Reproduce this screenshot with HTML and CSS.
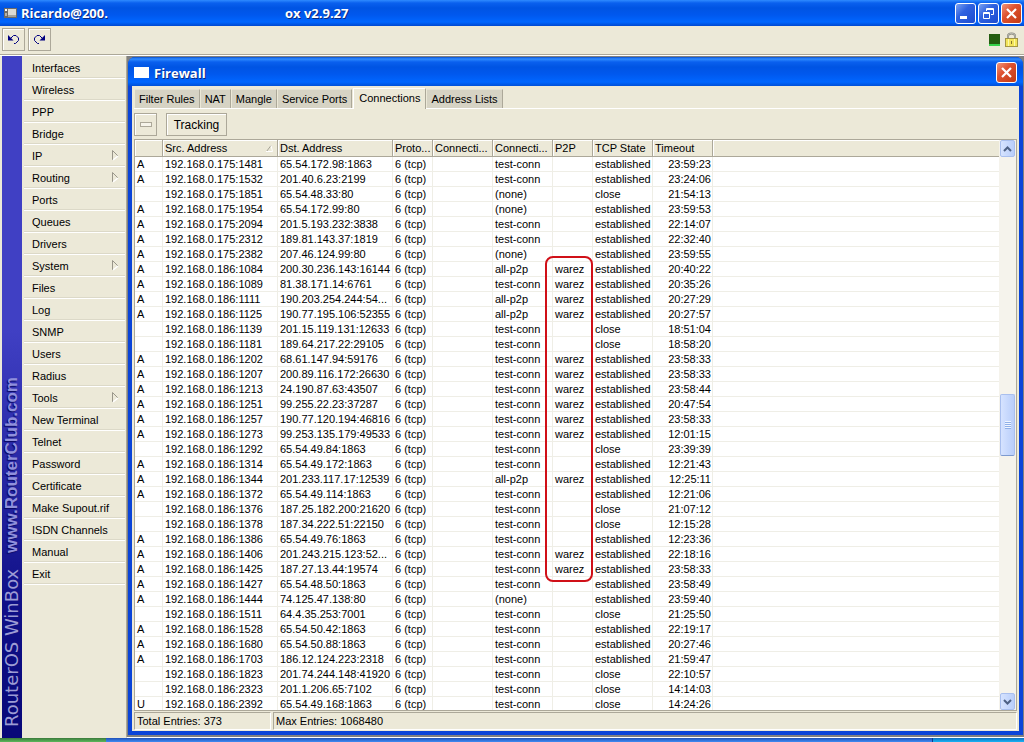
FILE: index.html
```html
<!DOCTYPE html>
<html lang="en">
<head>
    <meta charset="UTF-8">
    <meta name="viewport" content="width=device-width, initial-scale=1.0">
    <title>WinBox - Firewall</title>
    <link rel="stylesheet" href="styles.css">
</head>
<body>
    <!-- Main title bar -->
    <header class="titlebar">
        <svg class="app-icon" width="13" height="10" viewBox="0 0 13 10">
            <rect width="13" height="10" fill="#6d6a66"/>
            <rect x="1" y="1" width="2" height="2" fill="#fff"/>
            <rect x="1" y="5" width="2" height="3" fill="#b5b2aa"/>
            <rect x="4" y="1" width="8" height="6" fill="#dcdad3"/>
            <rect x="4" y="7" width="8" height="2" fill="#a5a39d"/>
        </svg>
        <h1 class="app-title"><span class="app-user">Ricardo@200.</span><span>ox v2.9.27</span></h1>
        <div class="win-buttons">
            <button type="button" class="win-btn" aria-label="Minimize">
                <svg width="19" height="19" viewBox="0 0 19 19"><rect x="4" y="12" width="7" height="3" fill="#fff"/></svg>
            </button>
            <button type="button" class="win-btn" aria-label="Restore">
                <svg width="19" height="19" viewBox="0 0 19 19" fill="none" stroke="#fff"><path d="M7.500 7V4.500H14.500V10.500H12M7 5.500H15"/><path d="M4.500 8.500H10.500V14.500H4.500ZM4 9.500H11"/></svg>
            </button>
            <button type="button" class="win-btn win-close" aria-label="Close">
                <svg width="19" height="19" viewBox="0 0 19 19"><path d="M5 5L14 14M14 5L5 14" stroke="#fff" stroke-width="2.200"/></svg>
            </button>
        </div>
    </header>

    <!-- Undo / redo -->
    <div class="toolbar">
        <button type="button" class="tool-btn" aria-label="Undo">
            <svg width="13" height="11" viewBox="0 0 13 11"><path d="M1 1V6.500H6.500Z" fill="#000080"/><path d="M4 4L6.500 1.500H9L11.500 4V6.500L8.500 9.500H7" fill="none" stroke="#000080"/></svg>
        </button>
        <button type="button" class="tool-btn" aria-label="Redo">
            <svg width="13" height="11" viewBox="0 0 13 11"><path d="M12 1V6.500H6.500Z" fill="#000080"/><path d="M9 4L6.500 1.500H4L1.500 4V6.500L4.500 9.500H6" fill="none" stroke="#000080"/></svg>
        </button>
        <div class="toolbar-status">
            <span class="cpu"></span>
            <svg width="13" height="15" viewBox="0 0 13 15">
                <path d="M3 6V4C3 0.500 10 0.500 10 4V6" fill="none" stroke="#85857c" stroke-width="2"/>
                <path d="M3 6V4C3 0.500 10 0.500 10 4V6" fill="none" stroke="#d8d8d0" stroke-width="0.700"/>
                <rect x="0.500" y="6.500" width="12" height="8" fill="#f2e45a" stroke="#a39544"/>
                <path d="M3.500 7V14M9.500 7V14" stroke="#fdf9a5"/>
                <path d="M6.500 9V12" stroke="#85732a"/>
            </svg>
        </div>
    </div>

    <main class="main">
        <div class="brand"><span class="brand-name">RouterOS WinBox</span><span class="brand-site">www.RouterClub.com</span></div>

        <nav class="menu">
            <button type="button">Interfaces</button>
            <button type="button">Wireless</button>
            <button type="button">PPP</button>
            <button type="button">Bridge</button>
            <button type="button" class="has-sub">IP<svg width="7" height="11" viewBox="0 0 7 11"><path d="M0.500 10V0.500L6 6" fill="none" stroke="#99968a"/><path d="M6 6L1 10" stroke="#fff" stroke-width="1.500"/></svg></button>
            <button type="button" class="has-sub">Routing<svg width="7" height="11" viewBox="0 0 7 11"><path d="M0.500 10V0.500L6 6" fill="none" stroke="#99968a"/><path d="M6 6L1 10" stroke="#fff" stroke-width="1.500"/></svg></button>
            <button type="button">Ports</button>
            <button type="button">Queues</button>
            <button type="button">Drivers</button>
            <button type="button" class="has-sub">System<svg width="7" height="11" viewBox="0 0 7 11"><path d="M0.500 10V0.500L6 6" fill="none" stroke="#99968a"/><path d="M6 6L1 10" stroke="#fff" stroke-width="1.500"/></svg></button>
            <button type="button">Files</button>
            <button type="button">Log</button>
            <button type="button">SNMP</button>
            <button type="button">Users</button>
            <button type="button">Radius</button>
            <button type="button" class="has-sub">Tools<svg width="7" height="11" viewBox="0 0 7 11"><path d="M0.500 10V0.500L6 6" fill="none" stroke="#99968a"/><path d="M6 6L1 10" stroke="#fff" stroke-width="1.500"/></svg></button>
            <button type="button">New Terminal</button>
            <button type="button">Telnet</button>
            <button type="button">Password</button>
            <button type="button">Certificate</button>
            <button type="button">Make Supout.rif</button>
            <button type="button">ISDN Channels</button>
            <button type="button">Manual</button>
            <button type="button">Exit</button>
        </nav>

        <div class="workspace">
            <section class="window">
                <div class="window-title">
                    <span class="window-icon"></span>
                    <h2>Firewall</h2>
                    <button type="button" class="win-btn win-close" aria-label="Close Firewall">
                        <svg width="19" height="19" viewBox="0 0 19 19"><path d="M5 5L14 14M14 5L5 14" stroke="#fff" stroke-width="2.200"/></svg>
                    </button>
                </div>

                <div class="window-body">
                    <div class="tabs" role="tablist">
                        <button type="button" role="tab">Filter Rules</button>
                        <button type="button" role="tab">NAT</button>
                        <button type="button" role="tab">Mangle</button>
                        <button type="button" role="tab">Service Ports</button>
                        <button type="button" role="tab" class="active" aria-selected="true">Connections</button>
                        <button type="button" role="tab">Address Lists</button>
                    </div>

                    <div class="actions">
                        <button type="button" class="remove" aria-label="Remove"><span></span></button>
                        <button type="button" class="tracking">Tracking</button>
                    </div>

                    <div class="grid">
                        <div class="grid-view">
                            <table class="connections">
                                <colgroup>
                                    <col class="c-flag"><col class="c-addr"><col class="c-addr"><col class="c-small"><col class="c-mid">
                                    <col class="c-mid"><col class="c-small"><col class="c-mid"><col class="c-mid"><col>
                                </colgroup>
                                <thead>
                                    <tr><th></th><th>Src. Address<svg class="sort" width="7" height="7" viewBox="0 0 7 7"><path d="M0.500 6.500L5 0.500" stroke="#a5a295"/><path d="M5 0.500L6.500 6.500H0" fill="none" stroke="#fff"/></svg></th><th>Dst. Address</th><th>Proto...</th><th>Connecti...</th><th>Connecti...</th><th>P2P</th><th>TCP State</th><th>Timeout</th><th></th></tr>
                                </thead>
                                <tbody>
                                    <tr><td>A</td><td>192.168.0.175:1481</td><td>65.54.172.98:1863</td><td>6 (tcp)</td><td></td><td>test-conn</td><td></td><td>established</td><td>23:59:23</td><td></td></tr>
                                    <tr><td>A</td><td>192.168.0.175:1532</td><td>201.40.6.23:2199</td><td>6 (tcp)</td><td></td><td>test-conn</td><td></td><td>established</td><td>23:24:06</td><td></td></tr>
                                    <tr><td></td><td>192.168.0.175:1851</td><td>65.54.48.33:80</td><td>6 (tcp)</td><td></td><td>(none)</td><td></td><td>close</td><td>21:54:13</td><td></td></tr>
                                    <tr><td>A</td><td>192.168.0.175:1954</td><td>65.54.172.99:80</td><td>6 (tcp)</td><td></td><td>(none)</td><td></td><td>established</td><td>23:59:53</td><td></td></tr>
                                    <tr><td>A</td><td>192.168.0.175:2094</td><td>201.5.193.232:3838</td><td>6 (tcp)</td><td></td><td>test-conn</td><td></td><td>established</td><td>22:14:07</td><td></td></tr>
                                    <tr><td>A</td><td>192.168.0.175:2312</td><td>189.81.143.37:1819</td><td>6 (tcp)</td><td></td><td>test-conn</td><td></td><td>established</td><td>22:32:40</td><td></td></tr>
                                    <tr><td>A</td><td>192.168.0.175:2382</td><td>207.46.124.99:80</td><td>6 (tcp)</td><td></td><td>(none)</td><td></td><td>established</td><td>23:59:55</td><td></td></tr>
                                    <tr><td>A</td><td>192.168.0.186:1084</td><td>200.30.236.143:16144</td><td>6 (tcp)</td><td></td><td>all-p2p</td><td>warez</td><td>established</td><td>20:40:22</td><td></td></tr>
                                    <tr><td>A</td><td>192.168.0.186:1089</td><td>81.38.171.14:6761</td><td>6 (tcp)</td><td></td><td>test-conn</td><td>warez</td><td>established</td><td>20:35:26</td><td></td></tr>
                                    <tr><td>A</td><td>192.168.0.186:1111</td><td>190.203.254.244:54...</td><td>6 (tcp)</td><td></td><td>all-p2p</td><td>warez</td><td>established</td><td>20:27:29</td><td></td></tr>
                                    <tr><td>A</td><td>192.168.0.186:1125</td><td>190.77.195.106:52355</td><td>6 (tcp)</td><td></td><td>all-p2p</td><td>warez</td><td>established</td><td>20:27:57</td><td></td></tr>
                                    <tr><td></td><td>192.168.0.186:1139</td><td>201.15.119.131:12633</td><td>6 (tcp)</td><td></td><td>test-conn</td><td></td><td>close</td><td>18:51:04</td><td></td></tr>
                                    <tr><td></td><td>192.168.0.186:1181</td><td>189.64.217.22:29105</td><td>6 (tcp)</td><td></td><td>test-conn</td><td></td><td>close</td><td>18:58:20</td><td></td></tr>
                                    <tr><td>A</td><td>192.168.0.186:1202</td><td>68.61.147.94:59176</td><td>6 (tcp)</td><td></td><td>test-conn</td><td>warez</td><td>established</td><td>23:58:33</td><td></td></tr>
                                    <tr><td>A</td><td>192.168.0.186:1207</td><td>200.89.116.172:26630</td><td>6 (tcp)</td><td></td><td>test-conn</td><td>warez</td><td>established</td><td>23:58:33</td><td></td></tr>
                                    <tr><td>A</td><td>192.168.0.186:1213</td><td>24.190.87.63:43507</td><td>6 (tcp)</td><td></td><td>test-conn</td><td>warez</td><td>established</td><td>23:58:44</td><td></td></tr>
                                    <tr><td>A</td><td>192.168.0.186:1251</td><td>99.255.22.23:37287</td><td>6 (tcp)</td><td></td><td>test-conn</td><td>warez</td><td>established</td><td>20:47:54</td><td></td></tr>
                                    <tr><td>A</td><td>192.168.0.186:1257</td><td>190.77.120.194:46816</td><td>6 (tcp)</td><td></td><td>test-conn</td><td>warez</td><td>established</td><td>23:58:33</td><td></td></tr>
                                    <tr><td>A</td><td>192.168.0.186:1273</td><td>99.253.135.179:49533</td><td>6 (tcp)</td><td></td><td>test-conn</td><td>warez</td><td>established</td><td>12:01:15</td><td></td></tr>
                                    <tr><td></td><td>192.168.0.186:1292</td><td>65.54.49.84:1863</td><td>6 (tcp)</td><td></td><td>test-conn</td><td></td><td>close</td><td>23:39:39</td><td></td></tr>
                                    <tr><td>A</td><td>192.168.0.186:1314</td><td>65.54.49.172:1863</td><td>6 (tcp)</td><td></td><td>test-conn</td><td></td><td>established</td><td>12:21:43</td><td></td></tr>
                                    <tr><td>A</td><td>192.168.0.186:1344</td><td>201.233.117.17:12539</td><td>6 (tcp)</td><td></td><td>all-p2p</td><td>warez</td><td>established</td><td>12:25:11</td><td></td></tr>
                                    <tr><td>A</td><td>192.168.0.186:1372</td><td>65.54.49.114:1863</td><td>6 (tcp)</td><td></td><td>test-conn</td><td></td><td>established</td><td>12:21:06</td><td></td></tr>
                                    <tr><td></td><td>192.168.0.186:1376</td><td>187.25.182.200:21620</td><td>6 (tcp)</td><td></td><td>test-conn</td><td></td><td>close</td><td>21:07:12</td><td></td></tr>
                                    <tr><td></td><td>192.168.0.186:1378</td><td>187.34.222.51:22150</td><td>6 (tcp)</td><td></td><td>test-conn</td><td></td><td>close</td><td>12:15:28</td><td></td></tr>
                                    <tr><td>A</td><td>192.168.0.186:1386</td><td>65.54.49.76:1863</td><td>6 (tcp)</td><td></td><td>test-conn</td><td></td><td>established</td><td>12:23:36</td><td></td></tr>
                                    <tr><td>A</td><td>192.168.0.186:1406</td><td>201.243.215.123:52...</td><td>6 (tcp)</td><td></td><td>test-conn</td><td>warez</td><td>established</td><td>22:18:16</td><td></td></tr>
                                    <tr><td>A</td><td>192.168.0.186:1425</td><td>187.27.13.44:19574</td><td>6 (tcp)</td><td></td><td>test-conn</td><td>warez</td><td>established</td><td>23:58:33</td><td></td></tr>
                                    <tr><td>A</td><td>192.168.0.186:1427</td><td>65.54.48.50:1863</td><td>6 (tcp)</td><td></td><td>test-conn</td><td></td><td>established</td><td>23:58:49</td><td></td></tr>
                                    <tr><td>A</td><td>192.168.0.186:1444</td><td>74.125.47.138:80</td><td>6 (tcp)</td><td></td><td>(none)</td><td></td><td>established</td><td>23:59:40</td><td></td></tr>
                                    <tr><td></td><td>192.168.0.186:1511</td><td>64.4.35.253:7001</td><td>6 (tcp)</td><td></td><td>test-conn</td><td></td><td>close</td><td>21:25:50</td><td></td></tr>
                                    <tr><td>A</td><td>192.168.0.186:1528</td><td>65.54.50.42:1863</td><td>6 (tcp)</td><td></td><td>test-conn</td><td></td><td>established</td><td>22:19:17</td><td></td></tr>
                                    <tr><td>A</td><td>192.168.0.186:1680</td><td>65.54.50.88:1863</td><td>6 (tcp)</td><td></td><td>test-conn</td><td></td><td>established</td><td>20:27:46</td><td></td></tr>
                                    <tr><td>A</td><td>192.168.0.186:1703</td><td>186.12.124.223:2318</td><td>6 (tcp)</td><td></td><td>test-conn</td><td></td><td>established</td><td>21:59:47</td><td></td></tr>
                                    <tr><td></td><td>192.168.0.186:1823</td><td>201.74.244.148:41920</td><td>6 (tcp)</td><td></td><td>test-conn</td><td></td><td>close</td><td>22:10:57</td><td></td></tr>
                                    <tr><td></td><td>192.168.0.186:2323</td><td>201.1.206.65:7102</td><td>6 (tcp)</td><td></td><td>test-conn</td><td></td><td>close</td><td>14:14:03</td><td></td></tr>
                                    <tr><td>U</td><td>192.168.0.186:2392</td><td>65.54.49.168:1863</td><td>6 (tcp)</td><td></td><td>test-conn</td><td></td><td>close</td><td>14:24:26</td><td></td></tr>
                                </tbody>
                            </table>
                            <!-- Red outline around the warez connections -->
                            <div class="highlight"></div>
                        </div>
                        <div class="scrollbar">
                            <button type="button" class="scroll-btn" aria-label="Scroll up"><svg width="9" height="6" viewBox="0 0 9 6"><path d="M1 5L4.500 1.500L8 5" fill="none" stroke="#4d6185" stroke-width="2"/></svg></button>
                            <div class="scroll-thumb"></div>
                            <button type="button" class="scroll-btn" aria-label="Scroll down"><svg width="9" height="6" viewBox="0 0 9 6"><path d="M1 1L4.500 4.500L8 1" fill="none" stroke="#4d6185" stroke-width="2"/></svg></button>
                        </div>
                    </div>

                    <footer class="statusbar">
                        <span class="status-total">Total Entries: 373</span>
                        <span class="status-max">Max Entries: 1068480</span>
                    </footer>
                </div>
            </section>
        </div>
    </main>

    <!-- Top edge of the taskbar -->
    <div class="taskbar"><span class="start"></span><span class="tasks"></span><span class="tray"></span></div>
</body>
</html>
```
FILE: styles.css
```css
* {
    box-sizing: border-box;
}

body {
    margin: 0;
    height: 100vh;
    display: flex;
    flex-direction: column;
    overflow: hidden;
    background-color: #ece9d8;
    color: #000;
    font-family: "Liberation Sans", Arial, sans-serif;
    font-size: 11px;
    line-height: 14px;
}

button {
    font: inherit;
    color: inherit;
    margin: 0;
    padding: 0;
    border: none;
    background: none;
}

svg {
    display: block;
    flex: none;
}

/* Title bars */
.titlebar {
    flex: none;
    height: 26px;
    display: flex;
    align-items: center;
    gap: 4px;
    padding: 0 2px 0 4px;
    background: linear-gradient(#2f8bff 0, #0a60ee 3px, #0054e3 8px, #0058ee 15px, #0066ff 22px, #0048d0 26px);
}

.app-title,
.window-title h2 {
    flex: 1;
    margin: 0;
    color: #fff;
    font-family: "Open Sans", "Noto Sans", sans-serif;
    font-size: 13px;
    font-weight: bold;
    line-height: 16px;
    text-shadow: 1px 1px 0 #0a2a80;
    white-space: pre;
}

.app-title {
    display: flex;
}

.app-user {
    width: 264px;
}

.win-buttons {
    display: flex;
    gap: 2px;
}

.win-btn {
    flex: none;
    width: 21px;
    height: 21px;
    border: 1px solid #fff;
    border-radius: 3px;
    background: linear-gradient(135deg, #7ba2f2, #2f62e0 40%, #1c4bd0);
}

.win-close {
    background: linear-gradient(135deg, #f0957c, #de5230 40%, #c23a12);
}

/* Toolbar */
.toolbar {
    flex: none;
    height: 29px;
    display: flex;
    gap: 3px;
    padding: 2px 6px 0 2px;
    border-bottom: 1px solid #aca899;
}

.tool-btn {
    width: 23px;
    height: 23px;
    display: flex;
    align-items: center;
    justify-content: center;
    border: 1px solid #aca899;
    box-shadow: inset 1px 1px 0 #fff;
}

.toolbar-status {
    margin-left: auto;
    display: flex;
    align-items: center;
    gap: 5px;
    height: 23px;
}

.cpu {
    width: 11px;
    height: 12px;
    background-color: #245c10;
    border-bottom: 2px solid #35d04a;
}

/* Main area */
.main {
    flex: 1;
    min-height: 0;
    display: flex;
    padding-left: 2px;
    border-top: 1px solid #fff;
    background-color: #ece9d8;
}

.brand {
    flex: none;
    width: 20px;
    display: flex;
    align-items: center;
    gap: 16px;
    padding-top: 11px;
    writing-mode: vertical-rl;
    transform: rotate(180deg);
    background: linear-gradient(to top, #4040c4 0, #4040c4 40%, #101088 80%, #080878);
    line-height: 20px;
    white-space: nowrap;
}

.brand-name {
    color: #9c9cd4;
    font-family: "DejaVu Sans", sans-serif;
    font-size: 18px;
}

.brand-site {
    color: #9090dc;
    font-size: 17px;
    font-weight: bold;
    text-shadow: -1px -1px 1px #080860;
}

.menu {
    flex: none;
    width: 104px;
    padding: 1px 1px 0 2px;
}

.menu button {
    width: 100%;
    height: 22px;
    display: flex;
    align-items: center;
    justify-content: space-between;
    padding: 0 6px 0 8px;
    border-bottom: 1px solid #fff;
    box-shadow: inset 0 -1px 0 #dcd9c8;
    text-align: left;
}

.workspace {
    flex: 1;
    min-width: 0;
    display: flex;
    padding: 1px 1px 2px 1px;
    border-left: 1px solid #aca899;
    background-color: #808080;
    border-bottom: 1px solid #fff;
}

/* Firewall window */
.window {
    flex: 1;
    min-width: 0;
    display: flex;
    flex-direction: column;
    padding: 0 4px 4px;
    border-radius: 7px 7px 0 0;
    background-color: #0a44d8;
}

.window-title {
    flex: none;
    height: 29px;
    display: flex;
    align-items: center;
    gap: 5px;
    margin: 0 -4px;
    padding: 2px 6px 0;
    border-radius: 7px 7px 0 0;
    background: linear-gradient(#0a50d0 0, #2f8bff 2px, #0a60ee 5px, #0054e3 10px, #0058ee 17px, #0066ff 25px, #0050d8 29px);
}

.window-icon {
    width: 15px;
    height: 11px;
    background-color: #fff;
}

.window-body {
    flex: 1;
    min-height: 0;
    display: flex;
    flex-direction: column;
    padding: 2px 2px 1px 2px;
    background-color: #ece9d8;
}

.tabs {
    flex: none;
    display: flex;
    align-items: flex-end;
    gap: 1px;
    height: 21px;
    padding-left: 1px;
    border-bottom: 1px solid #fff;
}

.tabs button {
    height: 19px;
    padding: 0 4px;
    border-right: 1px solid #aca899;
    border-top: 1px solid #e4e1d2;
    background-color: #d6d3c4;
}

.tabs .active {
    height: 21px;
    padding: 0 5px 2px;
    margin-bottom: -1px;
    border-top: 1px solid #fff;
    border-left: 1px solid #fff;
    background-color: #ece9d8;
}

.actions {
    flex: none;
    display: flex;
    gap: 9px;
    padding: 4px 0 3px;
}

.actions button {
    height: 23px;
    border: 1px solid #aca899;
    box-shadow: inset 1px 1px 0 #fff;
}

.remove {
    width: 23px;
    display: flex;
    align-items: center;
    justify-content: center;
}

.remove span {
    width: 12px;
    height: 5px;
    border: 1px solid #aca899;
    background-color: #f6f4ea;
}

.tracking {
    width: 61px;
    font-size: 12px;
}

/* Connection list */
.grid {
    flex: 1;
    min-height: 0;
    display: flex;
    border: 1px solid #aca899;
    background-color: #fff;
}

.grid-view {
    position: relative;
    flex: 1;
    min-width: 0;
    overflow: hidden;
}

.connections {
    width: 100%;
    table-layout: fixed;
    border-collapse: separate;
    border-spacing: 0;
}

.c-flag { width: 28px; }
.c-addr { width: 115px; }
.c-small { width: 40px; }
.c-mid { width: 60px; }

.connections th,
.connections td {
    height: 15px;
    padding: 0 1px 0 2px;
    line-height: 14px;
    font-weight: normal;
    text-align: left;
    white-space: nowrap;
    overflow: hidden;
}

.connections th {
    position: relative;
    height: 17px;
    line-height: 16px;
    border-right: 1px solid #aca899;
    border-bottom: 1px solid #aca899;
    box-shadow: inset 1px 1px 0 #fff;
    background-color: #ece9d8;
}

.connections td {
    border-right: 1px solid #efeee6;
    border-bottom: 1px solid #efeee6;
}

.connections th:last-child,
.connections td:last-child {
    border-right: none;
}

.connections td:nth-child(9) {
    text-align: right;
}

.sort {
    position: absolute;
    right: 4px;
    top: 5px;
}

.highlight {
    position: absolute;
    left: 410px;
    top: 116px;
    width: 48px;
    height: 326px;
    border: 2px solid #d01018;
    border-radius: 8px;
}

/* Scrollbar */
.scrollbar {
    flex: none;
    width: 17px;
    display: flex;
    flex-direction: column;
    justify-content: space-between;
    padding: 0 1px;
    background-color: #f5f3ec;
}

.scroll-btn,
.scroll-thumb {
    border: 1px solid #a9bfee;
    border-radius: 2px;
    background: linear-gradient(to right, #d6e3ff, #b9cefa);
}

.scroll-btn {
    height: 17px;
    display: flex;
    align-items: center;
    justify-content: center;
}

.scroll-thumb {
    height: 62px;
    display: flex;
    align-items: center;
    justify-content: center;
    border-bottom-color: #7d9ad0;
}

.scroll-thumb::after {
    content: "";
    width: 6px;
    height: 8px;
    background: repeating-linear-gradient(#f0f5ff 0, #f0f5ff 1px, #8fb0e8 1px, #8fb0e8 2px);
}

/* Status bar */
.statusbar {
    flex: none;
    display: flex;
    gap: 2px;
    padding-top: 1px;
}

.statusbar span {
    height: 18px;
    padding: 1px 2px;
    border: 1px solid #fff;
    border-top-color: #aca899;
    border-left-color: #aca899;
}

.status-total {
    width: 137px;
}

.status-max {
    flex: 1;
}

/* Taskbar */
.taskbar {
    flex: none;
    height: 4px;
    display: flex;
}

.start {
    width: 106px;
    background: linear-gradient(#3b7a3b, #5cb85c);
}

.tasks {
    flex: 1;
    background: linear-gradient(#1f50b8, #3f8cf3);
}

.tray {
    width: 92px;
    border-left: 1px solid #0a3a90;
    background: linear-gradient(#1070c0, #18b4f4);
}
```
